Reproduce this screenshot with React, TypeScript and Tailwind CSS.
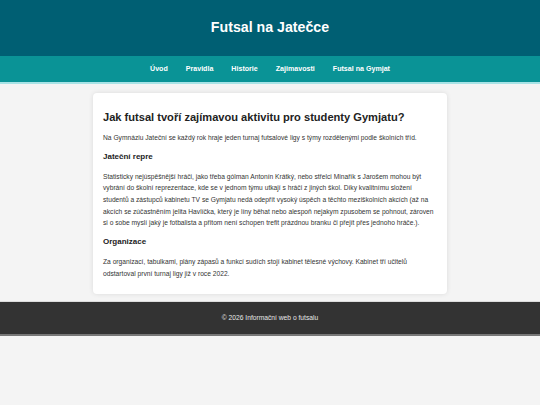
import React from 'react';

const navItems = ['Úvod', 'Pravidla', 'Historie', 'Zajimavosti', 'Futsal na Gymjat'];

const App: React.FC = () => {
  return (
    <div className="min-h-[405px] bg-[#f4f4f4] font-['Liberation_Sans',Arial,sans-serif] text-[#333]">
      {/* Header */}
      <header className="bg-[#005f73] h-[56px] flex items-center justify-center">
        <h1 className="text-[14.2px] font-bold text-white">Futsal na Jatečce</h1>
      </header>

      {/* Nav */}
      <nav className="bg-[#0a9396] h-[28px] border-b-2 border-[#a8e3e6] flex items-center justify-center gap-[18px]">
        {navItems.map((item) => (
          <a key={item} href="#" className="text-[7.1px] font-bold text-white">
            {item}
          </a>
        ))}
      </nav>

      {/* Content */}
      <main className="pt-[9px] pb-[7px]">
        <div className="mx-auto w-[354px] bg-white rounded-[4px] shadow-[0_0_5px_rgba(0,0,0,0.1)] px-[10px] pt-[10px] pb-[14px]">
          <h2 className="mt-[8px] text-[11.1px] leading-[1.15] font-bold text-[#222]">
            Jak futsal tvoří zajímavou aktivitu pro studenty Gymjatu?
          </h2>
          <p className="mt-[8px] text-[6.68px] leading-[11.7px]">
            Na Gymnáziu Jateční se každý rok hraje jeden turnaj futsalové ligy s týmy rozdělenými podle školních tříd.
          </p>
          <h3 className="mt-[9px] text-[8px] leading-[1.15] font-bold text-[#222]">Jateční repre</h3>
          <p className="mt-[9px] text-[6.68px] leading-[11.7px]">
            Statisticky nejúspěšnější hráči, jako třeba gólman Antonín Krátký, nebo střelci Minařík s Jarošem mohou být
            vybrání do školní reprezentace, kde se v jednom týmu utkají s hráči z jiných škol. Díky kvalitnímu složení
            studentů a zástupců kabinetu TV se Gymjatu nedá odepřít vysoký úspěch a těchto meziškolních akcích (až na
            akcích se zúčastněním jelita Havlíčka, který je líny běhat nebo alespoň nejakym zpusobem se pohnout, zároven
            si o sobe myslí jaký je fotbalista a přitom není schopen trefit prázdnou branku či přejít přes jednoho hráče.).
          </p>
          <h3 className="mt-[8px] text-[8px] leading-[1.15] font-bold text-[#222]">Organizace</h3>
          <p className="mt-[10px] text-[6.68px] leading-[11.7px]">
            Za organizací, tabulkami, plány zápasů a funkcí sudích stojí kabinet tělesné výchovy. Kabinet tří učitelů
            odstartoval první turnaj ligy již v roce 2022.
          </p>
        </div>
      </main>

      {/* Footer */}
      <footer className="bg-[#333] h-[35px] border-t border-[#ddd] border-b-2 border-b-[#777] flex items-center justify-center">
        <p className="text-[6.7px] text-[#e6e6e6]">© 2026 Informační web o futsalu</p>
      </footer>
    </div>
  );
};

export default App;
